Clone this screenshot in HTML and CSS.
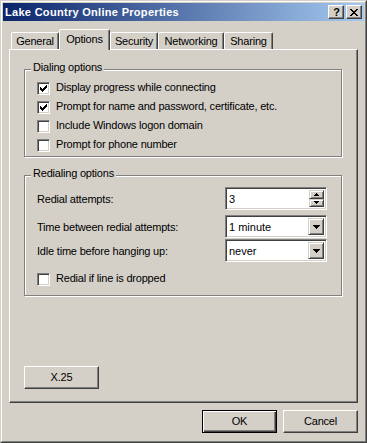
FILE: index.html
```html
<!DOCTYPE html>
<html>
<head>
<meta charset="utf-8">
<link rel="stylesheet" href="styles.css">
</head>
<body>
<div class="window">
  <div class="frame">
    <div class="titlebar">
      <span class="title">Lake Country Online Properties</span>
      <div class="tbtns">
        <div class="tbtn help">?</div>
        <div class="tbtn">
          <svg width="8" height="7" viewBox="0 0 8 7" shape-rendering="crispEdges"><path d="M0 0h2v1h-2zM6 0h2v1h-2zM1 1h2v1h-2zM5 1h2v1h-2zM2 2h4v1h-4zM3 3h2v1h-2zM2 4h4v1h-4zM1 5h2v1h-2zM5 5h2v1h-2zM0 6h2v1h-2zM6 6h2v1h-2z" fill="#000"/></svg>
        </div>
      </div>
    </div>
    <div class="content">
      <div class="tabs">
        <div class="tab w-general">General</div>
        <div class="tab active w-options">Options</div>
        <div class="tab w-security">Security</div>
        <div class="tab w-networking">Networking</div>
        <div class="tab w-sharing">Sharing</div>
      </div>
      <div class="panel">
        <div class="group g1">
          <span class="legend">Dialing options</span>
          <div class="check-row"><span class="cb checked"><svg width="9" height="9" viewBox="0 0 9 9" shape-rendering="crispEdges"><path d="M1 3h1v3h-1zM2 4h1v3h-1zM3 5h1v3h-1zM4 4h1v3h-1zM5 3h1v3h-1zM6 2h1v3h-1zM7 1h1v3h-1z" fill="#000"/></svg></span><span class="lbl">Display progress while connecting</span></div>
          <div class="check-row"><span class="cb checked"><svg width="9" height="9" viewBox="0 0 9 9" shape-rendering="crispEdges"><path d="M1 3h1v3h-1zM2 4h1v3h-1zM3 5h1v3h-1zM4 4h1v3h-1zM5 3h1v3h-1zM6 2h1v3h-1zM7 1h1v3h-1z" fill="#000"/></svg></span><span class="lbl">Prompt for name and password, certificate, etc.</span></div>
          <div class="check-row"><span class="cb"></span><span class="lbl">Include Windows logon domain</span></div>
          <div class="check-row"><span class="cb"></span><span class="lbl">Prompt for phone number</span></div>
        </div>
        <div class="group g2">
          <span class="legend">Redialing options</span>
          <div class="field-row r1">
            <span class="flbl">Redial attempts:</span>
            <div class="combo">
              <span class="val">3</span>
              <div class="spin">
                <div class="sbtn"><svg width="5" height="3" viewBox="0 0 5 3" shape-rendering="crispEdges"><path d="M2 0h1v1h1v1h1v1h-5v-1h1v-1h1z" fill="#000"/></svg></div>
                <div class="sbtn"><svg width="5" height="3" viewBox="0 0 5 3" shape-rendering="crispEdges"><path d="M0 0h5v1h-1v1h-1v1h-1v-1h-1v-1h-1z" fill="#000"/></svg></div>
              </div>
            </div>
          </div>
          <div class="field-row r2">
            <span class="flbl">Time between redial attempts:</span>
            <div class="combo">
              <span class="val">1 minute</span>
              <div class="dd"><svg width="7" height="4" viewBox="0 0 7 4" shape-rendering="crispEdges"><path d="M0 0h7v1h-1v1h-1v1h-1v1h-1v-1h-1v-1h-1v-1h-1z" fill="#000"/></svg></div>
            </div>
          </div>
          <div class="field-row r3">
            <span class="flbl">Idle time before hanging up:</span>
            <div class="combo">
              <span class="val">never</span>
              <div class="dd"><svg width="7" height="4" viewBox="0 0 7 4" shape-rendering="crispEdges"><path d="M0 0h7v1h-1v1h-1v1h-1v1h-1v-1h-1v-1h-1v-1h-1z" fill="#000"/></svg></div>
            </div>
          </div>
          <div class="check-row r4"><span class="cb"></span><span class="lbl">Redial if line is dropped</span></div>
        </div>
        <button class="btn x25">X.25</button>
      </div>
      <div class="actions">
        <button class="btn default">OK</button>
        <button class="btn">Cancel</button>
      </div>
    </div>
  </div>
</div>
</body>
</html>
```
FILE: styles.css
```css
* { box-sizing: border-box; }
html, body { margin: 0; padding: 0; }
body {
  width: 367px;
  height: 443px;
  overflow: hidden;
  background: #D4D0C8;
  font-family: "Liberation Sans", Arial, sans-serif;
  font-size: 11px;
  letter-spacing: -0.2px;
  color: #000;
}
.window {
  width: 367px;
  height: 443px;
  border: 1px solid;
  border-color: #D4D0C8 #404040 #404040 #D4D0C8;
}
.frame {
  height: 100%;
  border: 1px solid;
  border-color: #fff #808080 #808080 #fff;
  padding: 1px;
  display: flex;
  flex-direction: column;
}
.titlebar {
  height: 18px;
  flex: none;
  background: linear-gradient(to right, #0A246A, #A6CAF0);
  display: flex;
  align-items: center;
  justify-content: space-between;
  padding: 0 2px;
}
.title {
  color: #fff;
  font-weight: bold;
  font-size: 11px;
  line-height: 13px;
  letter-spacing: 0.3px;
}
.tbtns { display: flex; gap: 2px; }
.tbtn {
  width: 16px;
  height: 14px;
  background: #D4D0C8;
  border: 1px solid;
  border-color: #fff #404040 #404040 #fff;
  box-shadow: inset -1px -1px #808080;
  display: flex;
  align-items: center;
  justify-content: center;
}
.tbtn.help {
  font-weight: bold;
  font-size: 11px;
  line-height: 12px;
  padding-left: 1px;
}
.content { padding: 0 6px; }
.tabs {
  display: flex;
  align-items: flex-end;
  height: 20px;
  margin: 8px 0 0 2px;
  position: relative;
  z-index: 1;
}
.tab {
  height: 17px;
  border: 1px solid;
  border-bottom: none;
  border-color: #fff #404040 transparent #fff;
  box-shadow: inset -1px 0 #808080;
  border-radius: 2px 2px 0 0;
  text-align: center;
  line-height: 13px;
  padding-top: 2px;
  background: #D4D0C8;
}
.tab.active {
  height: 21px;
  margin-bottom: -1px;
  padding-top: 3px;
}
.w-general { width: 48px; }
.w-options { width: 51px; }
.w-security { width: 48px; }
.w-networking { width: 66px; }
.w-sharing { width: 49px; }
.panel {
  height: 354px;
  border: 1px solid;
  border-color: #fff #404040 #404040 #fff;
  box-shadow: inset -1px -1px #808080;
  padding: 19px 0 0 14px;
}
.group {
  position: relative;
  width: 318px;
  border: 1px solid #808080;
  box-shadow: inset 1px 1px #fff, 1px 1px #fff;
  padding-left: 12px;
}
.legend {
  position: absolute;
  left: 6px;
  top: -9px;
  padding: 0 2px;
  line-height: 13px;
  background: #D4D0C8;
}
.g1 { height: 88px; padding-top: 9px; }
.g2 { height: 121px; margin-top: 18px; padding-top: 11px; }
.check-row {
  display: flex;
  align-items: flex-start;
  height: 19px;
  gap: 6px;
}
.cb {
  flex: none;
  width: 13px;
  height: 13px;
  margin-top: 3px;
  background: #fff;
  border: 1px solid;
  border-color: #808080 #fff #fff #808080;
  box-shadow: inset 1px 1px #404040, inset -1px -1px #D4D0C8;
  padding: 1px;
  display: flex;
}
.lbl { line-height: 13px; margin-top: 2px; }
.field-row {
  display: flex;
  align-items: center;
  justify-content: space-between;
  width: 290px;
}
.flbl { line-height: 13px; padding-top: 2px; }
.r1 { height: 23px; }
.r2 { height: 23px; margin-top: 5px; }
.r3 { height: 23px; margin-top: 1px; }
.r4 { margin-top: 8px; }
.combo {
  width: 102px;
  height: 23px;
  background: #fff;
  border: 1px solid;
  border-color: #808080 #fff #fff #808080;
  box-shadow: inset 1px 1px #404040, inset -1px -1px #D4D0C8;
  padding: 2px;
  display: flex;
}
.val {
  flex: 1;
  padding-left: 1px;
  line-height: 19px;
  font-size: 11px;
  letter-spacing: 0;
}
.dd {
  width: 16px;
  background: #D4D0C8;
  border: 1px solid;
  border-color: #D4D0C8 #404040 #404040 #D4D0C8;
  box-shadow: inset 1px 1px #fff, inset -1px -1px #808080;
  display: flex;
  align-items: center;
  justify-content: center;
}
.spin {
  width: 15px;
  display: flex;
  flex-direction: column;
}
.sbtn {
  flex: 1;
  background: #D4D0C8;
  border: 1px solid;
  border-color: #D4D0C8 #404040 #404040 #D4D0C8;
  box-shadow: inset 1px 1px #fff, inset -1px -1px #808080;
  display: flex;
  align-items: center;
  justify-content: center;
}
.btn {
  display: flex;
  align-items: center;
  justify-content: center;
  width: 75px;
  height: 23px;
  padding: 0 0 1px;
  background: #D4D0C8;
  border: 1px solid;
  border-color: #fff #404040 #404040 #fff;
  box-shadow: inset -1px -1px #808080;
  font-family: "Liberation Sans", Arial, sans-serif;
  font-size: 11px;
  letter-spacing: -0.2px;
  color: #000;
}
.x25 { margin-top: 70px; }
.btn.default {
  border-color: #000;
  box-shadow: inset 1px 1px #fff, inset -1px -1px #404040, inset -2px -2px #808080;
}
.actions {
  display: flex;
  justify-content: flex-end;
  gap: 6px;
  margin-top: 7px;
}
```
